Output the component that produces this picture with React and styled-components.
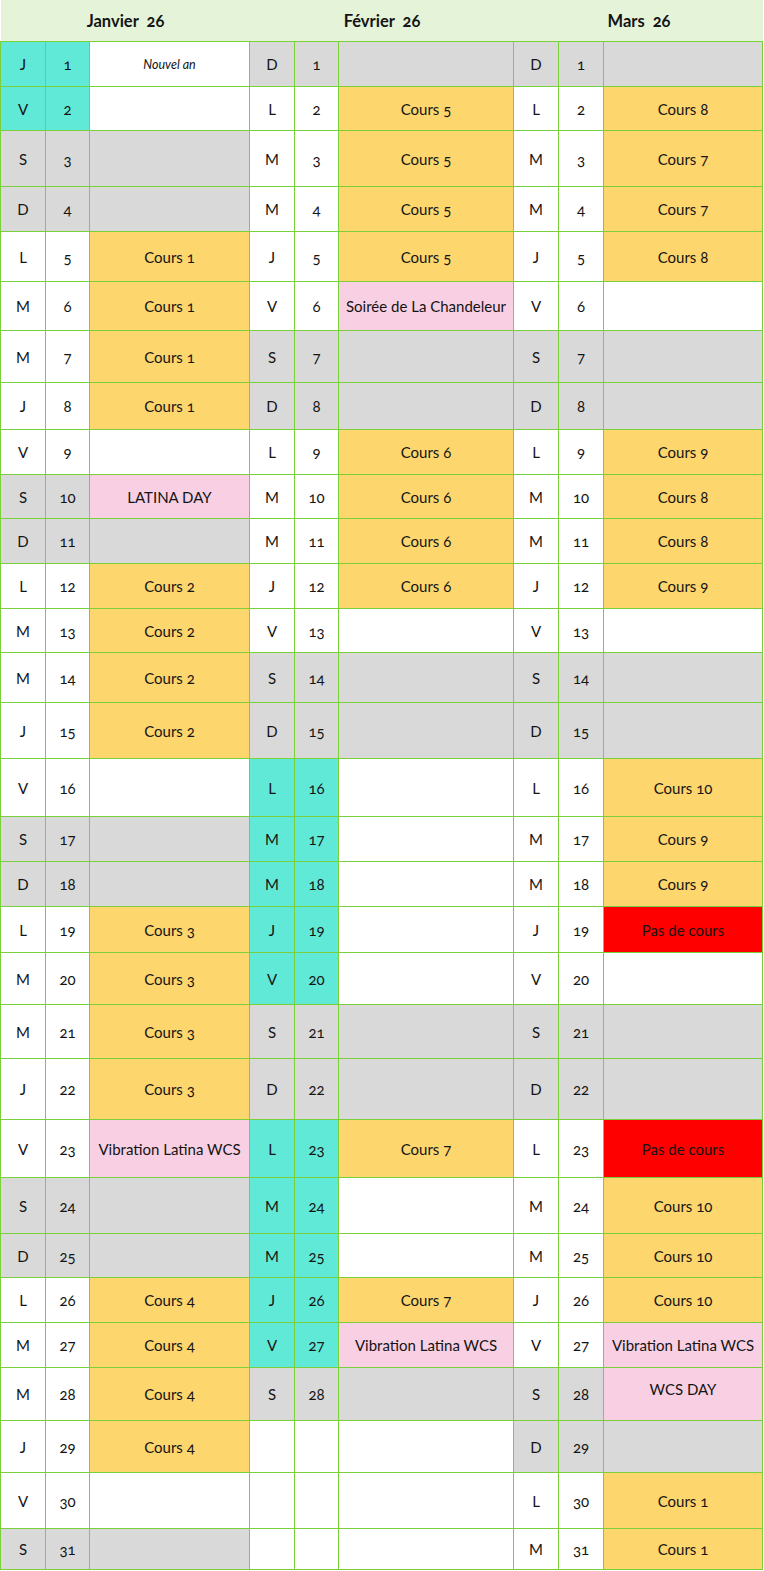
import React from 'react';
import styled, { createGlobalStyle } from 'styled-components';

const Global = createGlobalStyle`
  html, body { margin: 0; padding: 0; background: #ffffff; }
  body { font-family: Lato, "Open Sans", "Liberation Sans", sans-serif; color: #141414; }
`;

const COLORS = {
  white: '#ffffff',
  gray: '#d9d9d9',
  cyan: '#61e9d8',
  course: '#fed66e',
  pink: '#f9d0e3',
  red: '#ff0000',
  line: '#7ad03a',
  head: '#e5f3d8',
};

const COLS = '44px 43px 159px 44px 43px 174px 44px 44px 158px';
const LINES = [41, 86, 130, 186, 231, 281, 330, 382, 429, 474, 518, 563, 608, 652, 702, 758, 816, 861, 906, 952, 1004, 1058, 1119, 1177, 1233, 1277, 1322, 1367, 1420, 1472, 1528, 1569];
const ROWS = LINES.slice(1).map((l, i) => `${l - LINES[i] - 1}px`).join(' ');

const Page = styled.div`
  width: 764px;
`;

const HeaderBar = styled.div`
  display: grid;
  grid-template-columns: 249px 264px 250px;
  height: 41px;
  background: ${COLORS.head};
  border-left: 1px solid #ffffff;
  box-sizing: border-box;
  width: 763px;
`;

const MonthTitle = styled.div`
  display: flex;
  align-items: center;
  justify-content: center;
  font-weight: 700;
  font-size: 16.5px;
  white-space: pre;
  padding-top: 1px;
  font-variant-numeric: oldstyle-nums;
`;

const Grid = styled.div`
  display: grid;
  grid-template-columns: ${COLS};
  grid-template-rows: ${ROWS};
  gap: 1px;
  padding: 1px;
  width: 763px;
  box-sizing: border-box;
  background: ${COLORS.line};
`;

const Cell = styled.div`
  display: flex;
  align-items: center;
  justify-content: center;
  background: ${(p) => COLORS[p.$bg]};
  font-size: 15px;
  font-variant-numeric: oldstyle-nums;
  font-feature-settings: "onum";
  white-space: nowrap;
  overflow: hidden;
  ${(p) => (p.$italic ? 'font-style: italic; font-size: 12.5px;' : '')}
  ${(p) => (p.$top ? 'padding-bottom: 10px;' : '')}
`;

const LETTERS = ['L', 'M', 'M', 'J', 'V', 'S', 'D'];

function buildMonth(startIdx, count, events, cyanDays) {
  const out = [];
  for (let n = 1; n <= 31; n += 1) {
    if (n > count) {
      out.push({ empty: true });
      continue;
    }
    const d = LETTERS[(startIdx + n - 1) % 7];
    const weekend = d === 'S' || d === 'D';
    const ev = events[n];
    const hl = cyanDays.includes(n);
    out.push({
      d,
      n,
      dayBg: hl ? 'cyan' : weekend ? 'gray' : 'white',
      evText: ev ? ev[0] : '',
      evBg: ev ? ev[1] : weekend ? 'gray' : 'white',
      italic: ev && ev[2] === 'i',
      top: ev && ev[2] === 't',
    });
  }
  return out;
}

const C = 'course';
const jan = buildMonth(3, 31, {
  1: ['Nouvel an', 'white', 'i'],
  5: ['Cours 1', C], 6: ['Cours 1', C], 7: ['Cours 1', C], 8: ['Cours 1', C],
  10: ['LATINA DAY', 'pink'],
  12: ['Cours 2', C], 13: ['Cours 2', C], 14: ['Cours 2', C], 15: ['Cours 2', C],
  19: ['Cours 3', C], 20: ['Cours 3', C], 21: ['Cours 3', C], 22: ['Cours 3', C],
  23: ['Vibration Latina WCS', 'pink'],
  26: ['Cours 4', C], 27: ['Cours 4', C], 28: ['Cours 4', C], 29: ['Cours 4', C],
}, [1, 2]);

const feb = buildMonth(6, 28, {
  2: ['Cours 5', C], 3: ['Cours 5', C], 4: ['Cours 5', C], 5: ['Cours 5', C],
  6: ['Soirée de La Chandeleur', 'pink'],
  9: ['Cours 6', C], 10: ['Cours 6', C], 11: ['Cours 6', C], 12: ['Cours 6', C],
  23: ['Cours 7', C], 26: ['Cours 7', C],
  27: ['Vibration Latina WCS', 'pink'],
}, [16, 17, 18, 19, 20, 23, 24, 25, 26, 27]);

const mar = buildMonth(6, 31, {
  2: ['Cours 8', C], 3: ['Cours 7', C], 4: ['Cours 7', C], 5: ['Cours 8', C],
  9: ['Cours 9', C], 10: ['Cours 8', C], 11: ['Cours 8', C], 12: ['Cours 9', C],
  16: ['Cours 10', C], 17: ['Cours 9', C], 18: ['Cours 9', C],
  19: ['Pas de cours', 'red'],
  23: ['Pas de cours', 'red'],
  24: ['Cours 10', C], 25: ['Cours 10', C], 26: ['Cours 10', C],
  27: ['Vibration Latina WCS', 'pink'],
  28: ['WCS DAY', 'pink', 't'],
  30: ['Cours 1', C], 31: ['Cours 1', C],
}, []);

const MONTHS = [jan, feb, mar];

export default function App() {
  const cells = [];
  for (let r = 0; r < 31; r += 1) {
    MONTHS.forEach((m, mi) => {
      const e = m[r];
      if (e.empty) {
        cells.push(<Cell key={`${r}-${mi}-a`} $bg="white" />);
        cells.push(<Cell key={`${r}-${mi}-b`} $bg="white" />);
        cells.push(<Cell key={`${r}-${mi}-c`} $bg="white" />);
      } else {
        cells.push(<Cell key={`${r}-${mi}-a`} $bg={e.dayBg}>{e.d}</Cell>);
        cells.push(<Cell key={`${r}-${mi}-b`} $bg={e.dayBg}>{e.n}</Cell>);
        cells.push(
          <Cell key={`${r}-${mi}-c`} $bg={e.evBg} $italic={e.italic} $top={e.top}>
            {e.evText}
          </Cell>
        );
      }
    });
  }
  return (
    <Page>
      <Global />
      <HeaderBar>
        <MonthTitle>{'Janvier  26'}</MonthTitle>
        <MonthTitle>{'Février  26'}</MonthTitle>
        <MonthTitle>{'Mars  26'}</MonthTitle>
      </HeaderBar>
      <Grid>{cells}</Grid>
    </Page>
  );
}
